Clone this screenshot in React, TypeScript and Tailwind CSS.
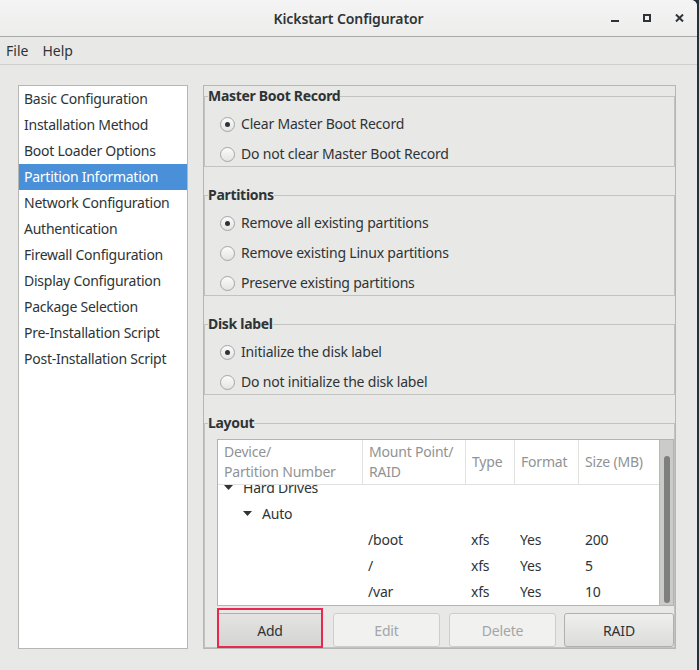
import React from 'react';

const sidebarItems = [
  'Basic Configuration',
  'Installation Method',
  'Boot Loader Options',
  'Partition Information',
  'Network Configuration',
  'Authentication',
  'Firewall Configuration',
  'Display Configuration',
  'Package Selection',
  'Pre-Installation Script',
  'Post-Installation Script',
];

const sections = [
  {
    title: 'Master Boot Record',
    options: ['Clear Master Boot Record', 'Do not clear Master Boot Record'],
  },
  {
    title: 'Partitions',
    options: [
      'Remove all existing partitions',
      'Remove existing Linux partitions',
      'Preserve existing partitions',
    ],
  },
  {
    title: 'Disk label',
    options: ['Initialize the disk label', 'Do not initialize the disk label'],
  },
];

const partitions = [
  { mount: '/boot', type: 'xfs', format: 'Yes', size: '200' },
  { mount: '/', type: 'xfs', format: 'Yes', size: '5' },
  { mount: '/var', type: 'xfs', format: 'Yes', size: '10' },
];

function Radio({ checked }: { checked: boolean }) {
  return (
    <span className="w-[15px] h-[15px] rounded-full border border-[#a3a6a6] bg-gradient-to-b from-[#fbfbfb] to-[#e4e4e3] flex items-center justify-center shrink-0">
      {checked && <span className="w-[5px] h-[5px] rounded-full bg-[#2e3436]" />}
    </span>
  );
}

function Arrow() {
  return (
    <svg width="9" height="5" viewBox="0 0 9 5" className="shrink-0">
      <path d="M0 0 H9 L4.5 5 Z" fill="#2e3436" />
    </svg>
  );
}

const cols = 'grid grid-cols-[145px_103px_49px_64px_80px]';

export default function App() {
  return (
    <div
      className="w-[699px] h-[670px] flex bg-[#22313b] text-[#2e3436] text-[14px]"
      style={{ fontFamily: '"Noto Sans", "DejaVu Sans", sans-serif' }}
    >
      <div className="w-[697px] h-full flex flex-col bg-[#e8e8e7] rounded-tr-[6px] overflow-hidden">
        {/* Title bar */}
        <div className="h-[37px] shrink-0 flex items-center bg-gradient-to-b from-[#f4f4f4] to-[#ededec] border-b border-[#a9a9a7] relative">
          <div className="flex-1 text-center font-semibold text-[14px] tracking-[-0.1px] text-[#2e3436]">
            Kickstart Configurator
          </div>
          <div className="absolute right-[13px] top-[14px] flex items-start gap-[24px]">
            <svg width="8" height="8" viewBox="0 0 8 8">
              <rect x="0" y="6" width="8" height="2" fill="#2e3436" />
            </svg>
            <svg width="8" height="8" viewBox="0 0 8 8">
              <rect x="1" y="1" width="6" height="6" fill="none" stroke="#2e3436" strokeWidth="2" />
            </svg>
            <svg width="9" height="8" viewBox="0 0 9 8">
              <path d="M1 0.5 L8 7.5 M8 0.5 L1 7.5" stroke="#2e3436" strokeWidth="2" />
            </svg>
          </div>
        </div>

        {/* Menu bar */}
        <div className="h-[28px] shrink-0 flex items-center pl-[6px] gap-[14px] border-b border-[#cfcfcd]">
          <span>File</span>
          <span>Help</span>
        </div>

        {/* Content */}
        <div className="flex pt-[20px] pl-[18px] gap-[15px]">
          {/* Sidebar list */}
          <div className="w-[170px] h-[564px] bg-white border border-[#b6b6b3] tracking-[-0.25px]">
            {sidebarItems.map((item) => (
              <div
                key={item}
                className={`h-[26px] flex items-center pl-[5px] pb-[2px] ${
                  item === 'Partition Information' ? 'bg-[#4a90d9] text-white' : ''
                }`}
              >
                {item}
              </div>
            ))}
          </div>

          {/* Right viewport */}
          <div className="w-[473px] h-[564px] border border-[#b6b6b3] pt-[2px] flex flex-col gap-[20px] overflow-hidden tracking-[-0.2px]">
            {sections.map((section) => (
              <fieldset key={section.title} className="border border-[#c2c2bf] m-0 p-0">
                <legend className="ml-[3px] font-bold leading-4 text-[14px] tracking-[-0.3px]">
                  {section.title}
                </legend>
                <div className="pt-[8px] pl-[15px] flex flex-col gap-[6px]">
                  {section.options.map((opt, i) => (
                    <div key={opt} className="h-[24px] flex items-center gap-[6px]">
                      <Radio checked={i === 0} />
                      <span className="-mt-[2px]">{opt}</span>
                    </div>
                  ))}
                </div>
              </fieldset>
            ))}

            {/* Layout */}
            <fieldset className="border border-[#c2c2bf] m-0 p-0">
              <legend className="ml-[3px] font-bold leading-4 text-[14px] tracking-[-0.3px]">Layout</legend>
              <div className="pt-[8px] pl-[12px]">
                <div className="w-[457px] h-[167px] border border-[#b3b3b0] bg-white flex">
                  <div className="w-[441px] flex flex-col">
                    <div className={`${cols} h-[45px] border-b border-[#e1e1e0] text-[#909394] leading-5`}>
                      <div className="pl-[6px] flex flex-col justify-center border-r border-[#e1e1e0]">
                        <span>Device/</span>
                        <span>Partition Number</span>
                      </div>
                      <div className="pl-[6px] flex flex-col justify-center border-r border-[#e1e1e0]">
                        <span>Mount Point/</span>
                        <span>RAID</span>
                      </div>
                      <div className="pl-[6px] flex items-center border-r border-[#e1e1e0]">Type</div>
                      <div className="pl-[6px] flex items-center border-r border-[#e1e1e0]">Format</div>
                      <div className="pl-[6px] flex items-center">Size (MB)</div>
                    </div>
                    <div className="flex-1 overflow-hidden">
                      <div className="-mt-[11px]">
                        <div className="h-[26px] flex items-center pl-[6px] gap-[10px]">
                          <Arrow />
                          <span>Hard Drives</span>
                        </div>
                        <div className="h-[26px] flex items-center pl-[25px] gap-[10px]">
                          <Arrow />
                          <span>Auto</span>
                        </div>
                        {partitions.map((p) => (
                          <div key={p.mount} className={`${cols} h-[26px] items-center`}>
                            <div />
                            <div className="pl-[5px]">{p.mount}</div>
                            <div className="pl-[5px]">{p.type}</div>
                            <div className="pl-[5px]">{p.format}</div>
                            <div className="pl-[6px]">{p.size}</div>
                          </div>
                        ))}
                      </div>
                    </div>
                  </div>
                  {/* Scrollbar */}
                  <div className="w-[14px] bg-[#cbcbc9] border-l border-[#b8b8b6] pt-[16px] pb-[2px] flex justify-center">
                    <div className="w-[6px] h-full rounded-full bg-[#7e8080]" />
                  </div>
                </div>

                <div className="mt-[7px] flex">
                  <div className="relative w-[106px]">
                    <button className="w-full h-[34px] rounded-[3px] border border-[#b0b0ad] bg-gradient-to-b from-[#e4e4e3] to-[#d4d4d3] text-[#2e3436]">
                      Add
                    </button>
                    <span className="absolute -top-[5px] left-0 right-0 -bottom-px border-[2.5px] border-[#e8284f] pointer-events-none" />
                  </div>
                  <button className="ml-[10px] w-[107px] h-[34px] rounded-[3px] border border-[#cdcdcb] bg-[#f1f1f0] text-[#a3a6a6]">
                    Edit
                  </button>
                  <button className="ml-[9px] w-[107px] h-[34px] rounded-[3px] border border-[#cdcdcb] bg-[#f1f1f0] text-[#a3a6a6]">
                    Delete
                  </button>
                  <button className="ml-[8px] w-[110px] h-[34px] rounded-[3px] border border-[#b0b0ad] bg-gradient-to-b from-[#efefee] to-[#dcdcdb] text-[#2e3436]">
                    RAID
                  </button>
                </div>
              </div>
            </fieldset>
          </div>
        </div>
      </div>
    </div>
  );
}
